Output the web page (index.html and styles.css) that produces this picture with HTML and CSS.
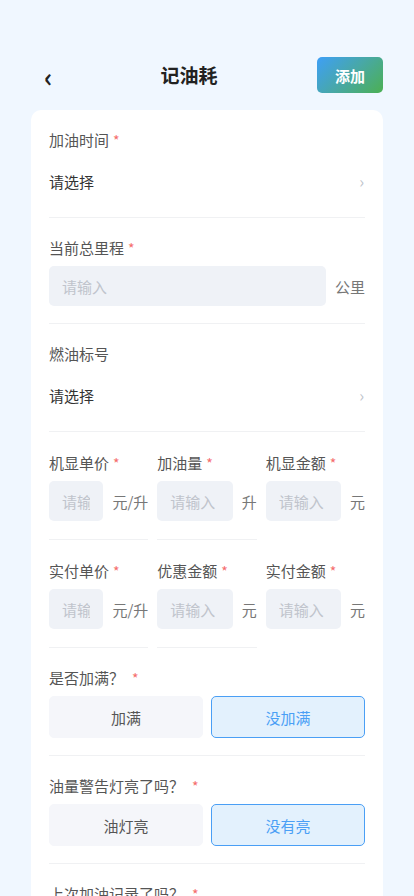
FILE: index.html
```html
<!DOCTYPE html>
<html lang="zh">
<head>
<meta charset="utf-8">
<link rel="stylesheet" href="styles.css">
</head>
<body>
<div class="page">
  <header class="header">
    <span class="back">‹</span>
    <h1 class="title">记油耗</h1>
    <button class="add-btn">添加</button>
  </header>
  <main class="card">
    <div class="item item-select">
      <div class="label">加油时间<span class="req">*</span></div>
      <div class="select"><span>请选择</span><span class="chev">›</span></div>
    </div>
    <div class="item">
      <div class="label">当前总里程<span class="req">*</span></div>
      <div class="field"><input class="input" placeholder="请输入"><span class="unit">公里</span></div>
    </div>
    <div class="item item-select">
      <div class="label">燃油标号</div>
      <div class="select"><span>请选择</span><span class="chev">›</span></div>
    </div>
    <div class="cols">
      <div class="item col">
        <div class="label">机显单价<span class="req">*</span></div>
        <div class="field"><input class="input" placeholder="请输入"><span class="unit">元/升</span></div>
      </div>
      <div class="item col">
        <div class="label">加油量<span class="req">*</span></div>
        <div class="field"><input class="input" placeholder="请输入"><span class="unit">升</span></div>
      </div>
      <div class="item col col-last">
        <div class="label">机显金额<span class="req">*</span></div>
        <div class="field"><input class="input" placeholder="请输入"><span class="unit">元</span></div>
      </div>
    </div>
    <div class="cols">
      <div class="item col">
        <div class="label">实付单价<span class="req">*</span></div>
        <div class="field"><input class="input" placeholder="请输入"><span class="unit">元/升</span></div>
      </div>
      <div class="item col">
        <div class="label">优惠金额<span class="req">*</span></div>
        <div class="field"><input class="input" placeholder="请输入"><span class="unit">元</span></div>
      </div>
      <div class="item col col-last">
        <div class="label">实付金额<span class="req">*</span></div>
        <div class="field"><input class="input" placeholder="请输入"><span class="unit">元</span></div>
      </div>
    </div>
    <div class="item">
      <div class="label">是否加满？<span class="req req-wide">*</span></div>
      <div class="choices"><button class="choice">加满</button><button class="choice active">没加满</button></div>
    </div>
    <div class="item">
      <div class="label">油量警告灯亮了吗？<span class="req req-wide">*</span></div>
      <div class="choices"><button class="choice">油灯亮</button><button class="choice active">没有亮</button></div>
    </div>
    <div class="item">
      <div class="label">上次加油记录了吗？<span class="req req-wide">*</span></div>
      <div class="choices"><button class="choice">记录了</button><button class="choice active">没记录</button></div>
    </div>
  </main>
</div>
</body>
</html>
```

FILE: styles.css
```css
* { box-sizing: border-box; }
html, body { margin: 0; padding: 0; }
body {
  background: #f0f7ff;
  font-family: "Noto Sans CJK SC", "Noto Sans", sans-serif;
  color: #333;
  height: 896px;
  overflow: hidden;
}
.page { padding: 57px 31px 0; }
.header {
  display: flex;
  align-items: center;
  height: 36px;
}
.back {
  width: 30px;
  padding-left: 13px;
  font-size: 26px;
  line-height: 36px;
  font-weight: 700;
  color: #222;
  margin-top: 2px;
}
.title {
  flex: 1;
  margin: 0;
  text-align: center;
  font-size: 19px;
  font-weight: 700;
  color: #222;
  line-height: 36px;
}
.add-btn {
  width: 66px;
  height: 36px;
  border: none;
  border-radius: 5px;
  background: linear-gradient(135deg, #3e9ff7 0%, #48a8a6 50%, #4cb052 100%);
  color: #fff;
  font-family: inherit;
  font-size: 15px;
  font-weight: 700;
  padding: 0;
}
.card {
  margin-top: 17px;
  background: #fff;
  border-radius: 10px;
  padding: 0 18px;
  min-height: 900px;
}
.item {
  padding: 20px 0 17px;
  border-bottom: 1px solid #f0f1f3;
}
.item-select { padding-bottom: 15px; }
.label {
  font-size: 15px;
  line-height: 20px;
  color: #555;
}
.req {
  color: #f56c6c;
  margin-left: 4px;
  font-size: 14px;
}
.req-wide { margin-left: 8px; }
.select {
  margin-top: 10px;
  height: 42px;
  display: flex;
  align-items: center;
  justify-content: space-between;
  font-size: 15px;
  color: #333;
}
.chev {
  color: #c0c4cc;
  font-size: 16px;
  padding-right: 1px;
}
.field {
  margin-top: 8px;
  display: flex;
  align-items: center;
  gap: 9px;
}
.input {
  flex: 1;
  min-width: 0;
  height: 40px;
  border: none;
  outline: none;
  border-radius: 5px;
  background: #eff2f7;
  padding: 0 13px;
  font-family: inherit;
  font-size: 15px;
  color: #333;
}
.input::placeholder { color: #c0c4cc; }
.unit {
  font-size: 15px;
  color: #777;
  white-space: nowrap;
}
.cols {
  display: flex;
  gap: 9px;
}
.col { flex: 1; min-width: 0; padding-top: 21px; padding-bottom: 18px; }
.col-last { border-bottom-color: transparent; }
.choices {
  margin-top: 8px;
  display: flex;
  gap: 8px;
}
.choice {
  flex: 1;
  height: 42px;
  border: 1px solid #f5f6fa;
  border-radius: 5px;
  background: #f5f6fa;
  color: #555;
  font-family: inherit;
  font-size: 15px;
  padding: 0;
}
.choice.active {
  background: #e3f1fd;
  border-color: #4a9ff5;
  color: #4a9ff5;
}
```
